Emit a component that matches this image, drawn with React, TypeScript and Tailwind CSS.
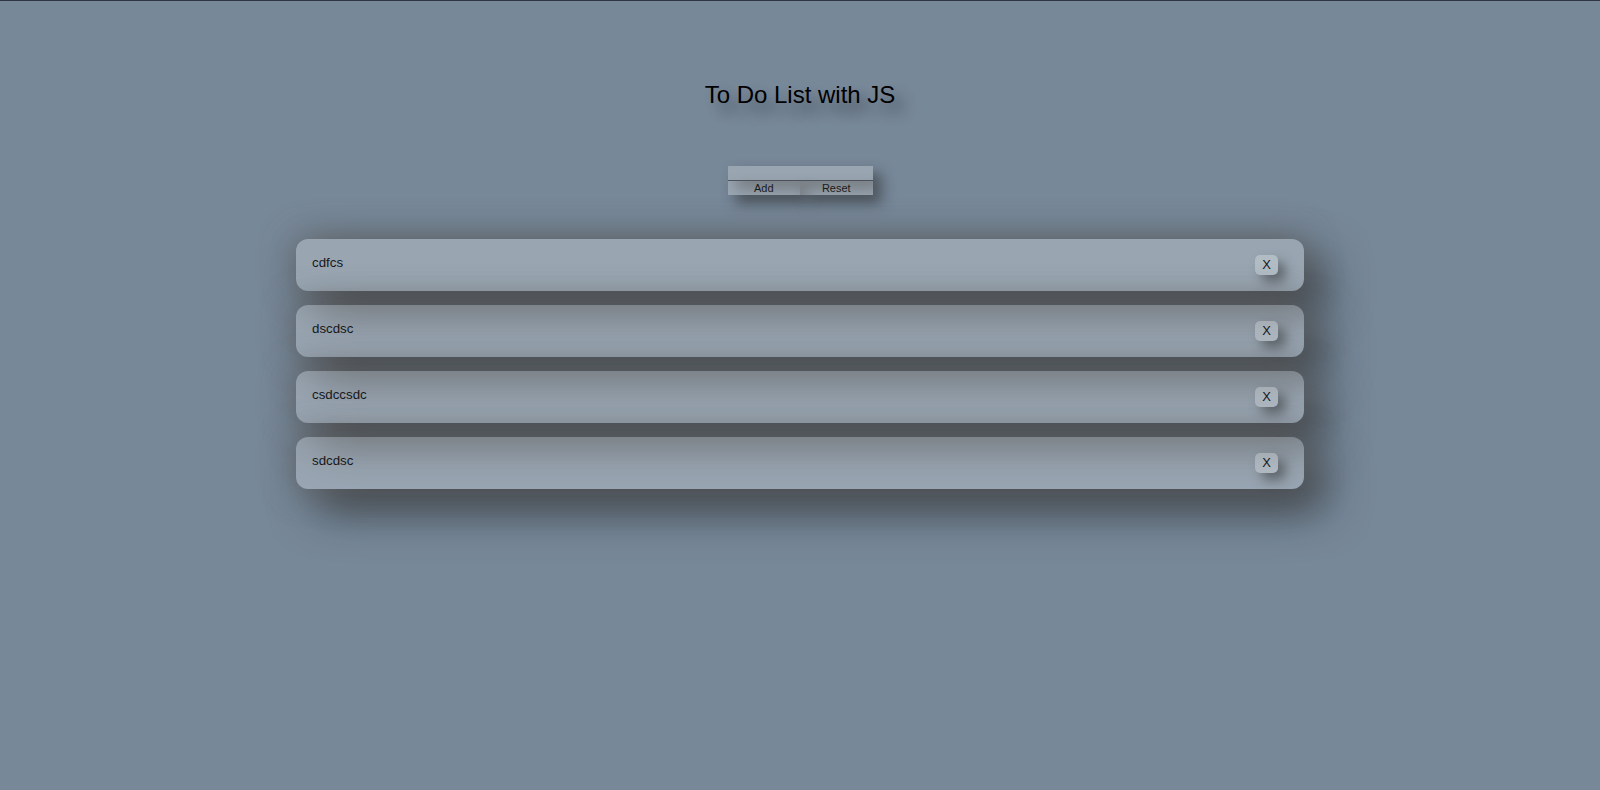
import React from "react";

const items = ["cdfcs", "dscdsc", "csdccsdc", "sdcdsc"];

export default function App() {
  return (
    <div className="min-h-[790px] bg-[#778899] border-t border-[#2d3540] font-['Liberation_Sans',Arial,sans-serif]">
      <h1 className="pt-[80px] text-center text-[24px] leading-[28px] text-black [text-shadow:10px_10px_14px_rgba(0,0,0,0.45)]">
        To Do List with JS
      </h1>
      <div className="mx-auto mt-[57px] w-[145px] flex flex-col">
        <input
          className="h-[15px] w-full bg-white/25 border-b border-[#4f555c] outline-none shadow-[8px_8px_14px_rgba(40,40,40,0.6)]"
          type="text"
        />
        <div className="flex h-[14px]">
          <button className="flex-1 bg-white/25 text-[11px] leading-[14px] text-[#1a1a1a] shadow-[8px_8px_14px_rgba(40,40,40,0.6)]">
            Add
          </button>
          <button className="flex-1 bg-white/25 text-[11px] leading-[14px] text-[#1a1a1a] shadow-[8px_8px_14px_rgba(40,40,40,0.6)]">
            Reset
          </button>
        </div>
      </div>
      <ul className="mx-auto mt-[44px] w-[1008px] flex flex-col gap-[14px]">
        {items.map((t) => (
          <li
            key={t}
            className="flex justify-between items-start p-4 pr-[26px] rounded-xl bg-white/25 shadow-[0px_0px_34px_rgba(95,95,95,0.85),20px_20px_45px_rgba(30,30,30,0.7)]"
          >
            <span className="text-[13.3px] leading-[15px] text-[#15181c]">{t}</span>
            <button className="self-center h-[20px] w-[23px] rounded-[5px] bg-white/25 text-[13px] leading-[20px] text-[#15181c] shadow-[7px_7px_12px_rgba(40,40,40,0.5)]">
              X
            </button>
          </li>
        ))}
      </ul>
    </div>
  );
}
